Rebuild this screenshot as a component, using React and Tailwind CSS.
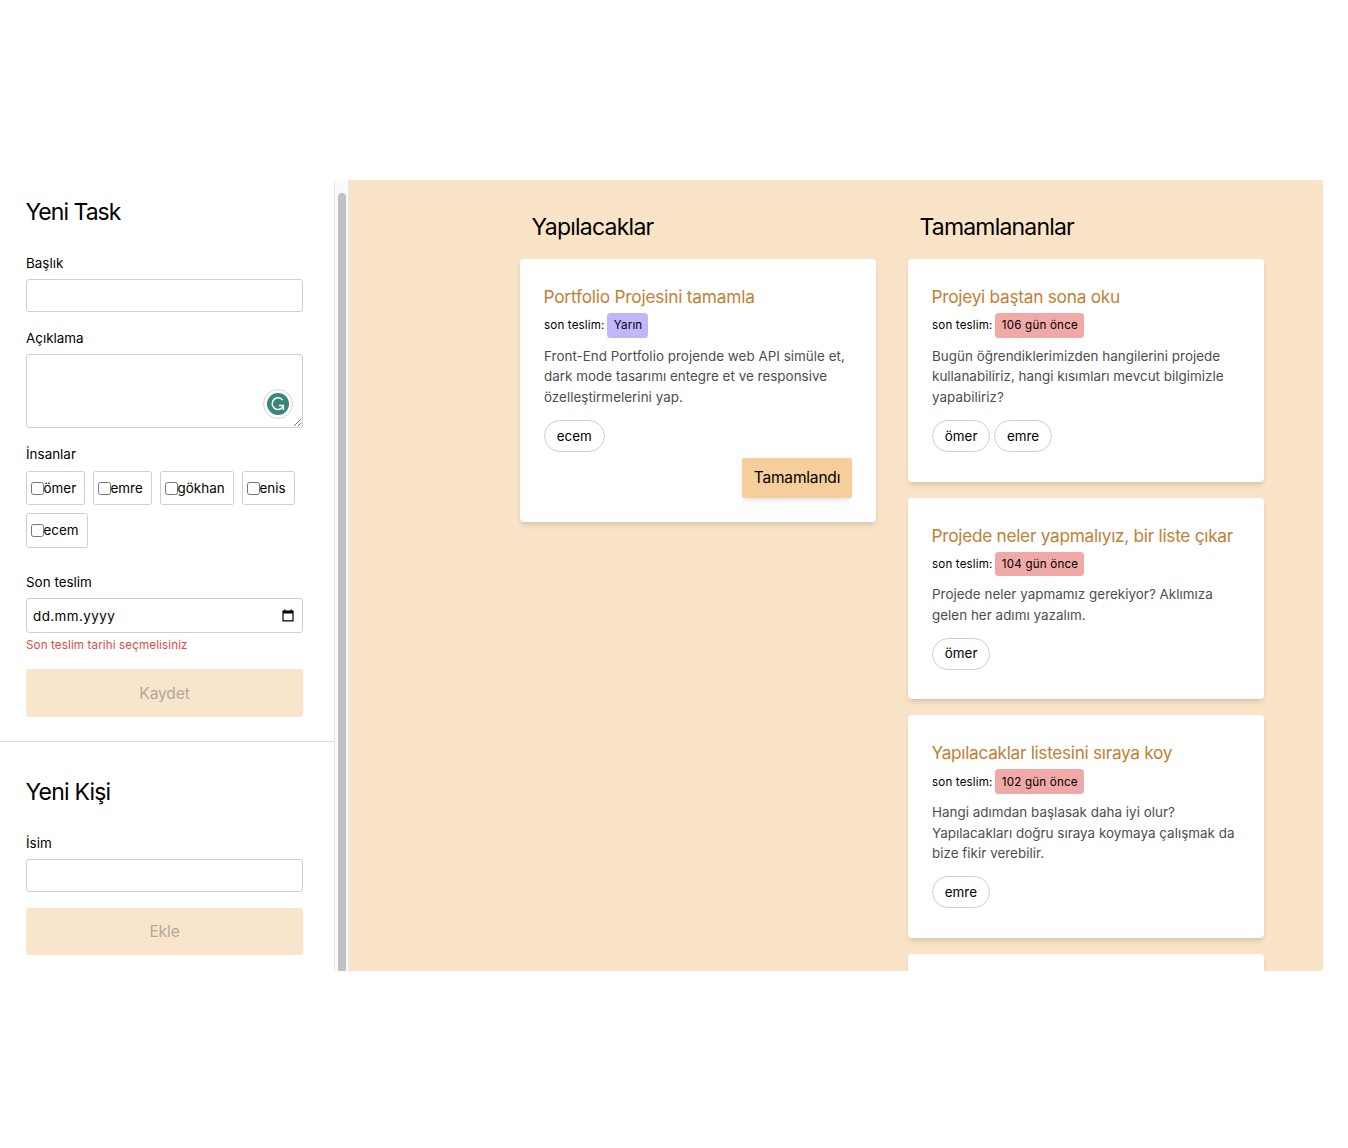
const people = [
  { name: "ömer", box: "w-[59px] h-[34px]" },
  { name: "emre", box: "w-[59px] h-[34px]" },
  { name: "gökhan", box: "w-[74px] h-[34px]" },
  { name: "enis", box: "w-[53px] h-[34px]" },
  { name: "ecem", box: "w-[62px] h-[35px]" },
];

const todo = [
  {
    title: "Portfolio Projesini tamamla",
    tracking: "tracking-[-0.2px]",
    due: "Yarın",
    soon: true,
    lines: [
      "Front-End Portfolio projende web API simüle et,",
      "dark mode tasarımı entegre et ve responsive",
      "özelleştirmelerini yap.",
    ],
    people: ["ecem"],
    action: true,
  },
];

const done = [
  {
    title: "Projeyi baştan sona oku",
    tracking: "tracking-[-0.26px]",
    due: "106 gün önce",
    lines: [
      "Bugün öğrendiklerimizden hangilerini projede",
      "kullanabiliriz, hangi kısımları mevcut bilgimizle",
      "yapabiliriz?",
    ],
    people: ["ömer", "emre"],
  },
  {
    title: "Projede neler yapmalıyız, bir liste çıkar",
    tracking: "tracking-[-0.28px]",
    due: "104 gün önce",
    lines: ["Projede neler yapmamız gerekiyor? Aklımıza", "gelen her adımı yazalım."],
    people: ["ömer"],
  },
  {
    title: "Yapılacaklar listesini sıraya koy",
    tracking: "tracking-[-0.31px]",
    due: "102 gün önce",
    lines: [
      "Hangi adımdan başlasak daha iyi olur?",
      "Yapılacakları doğru sıraya koymaya çalışmak da",
      "bize fikir verebilir.",
    ],
    people: ["emre"],
  },
  {},
];

function Label({ children, className }) {
  return <div className={`h-[22px] text-[13.4px] leading-[22px] tracking-[0.02px] ${className}`}>{children}</div>;
}

function SubmitButton({ children, className }) {
  return (
    <button
      disabled
      className={`block w-full rounded-[3px] bg-[#f9e5cc] text-center text-[15.5px] tracking-[-0.1px] text-[#b0a89c] ${className}`}
    >
      {children}
    </button>
  );
}

function Card({ task }) {
  if (!task.title) {
    return <article className="h-40 rounded-[4px] bg-white shadow-[0_4px_6px_-1px_rgba(0,0,0,0.12)]" />;
  }
  return (
    <article className="rounded-[4px] bg-white p-6 shadow-[0_4px_6px_-1px_rgba(0,0,0,0.11),0_2px_4px_-2px_rgba(0,0,0,0.1)]">
      <h3
        className={`-ml-[0.5px] whitespace-nowrap text-[17.25px] leading-[27px] text-[#bf8136] ${task.tracking}`}
      >
        {task.title}
      </h3>
      <div className="mt-[3px] flex h-[24.5px] items-center text-[11.6px] tracking-[0.16px]">
        <span className="w-[63.3px] whitespace-nowrap pt-[1.5px]">son teslim:</span>
        <span
          className={`flex h-full items-center rounded-[3.5px] pl-[6.5px] pt-[1.5px] ${
            task.soon ? "w-[41px] bg-[#c1b6f9]" : "w-[89px] bg-[#f0a9a7] tracking-[0.2px]"
          }`}
        >
          {task.due}
        </span>
      </div>
      <p className="mt-2 whitespace-nowrap text-[13.4px] leading-[20.75px] tracking-[0.03px] text-[#4d4d4d]">
        {task.lines.map((line) => (
          <span key={line} className="block">
            {line}
          </span>
        ))}
      </p>
      <div className="mt-3 flex gap-1">
        {task.people.map((name) => (
          <span
            key={name}
            className="flex h-8 items-center rounded-full border border-[#cfcfcf] px-[11.75px] text-[13.4px] tracking-[0.02px]"
          >
            {name}
          </span>
        ))}
      </div>
      <div className="mt-[5.75px] flex justify-end">
        {task.action && (
          <button className="h-10 w-[110px] rounded-[2px] bg-[#f5ce9b] pt-px text-[15.5px] tracking-[-0.18px] shadow-[0_4px_6px_-1px_rgba(0,0,0,0.08),0_2px_4px_-2px_rgba(0,0,0,0.08)]">
            Tamamlandı
          </button>
        )}
      </div>
    </article>
  );
}

function Column({ title, tracking, tasks }) {
  return (
    <section className="w-[356px] shrink-0">
      <h2 className={`mb-[14px] ml-[11.5px] mt-[30px] h-[35px] text-[23px] leading-[35px] ${tracking}`}>{title}</h2>
      <div className="flex flex-col gap-4">
        {tasks.map((task, i) => (
          <Card key={i} task={task} />
        ))}
      </div>
    </section>
  );
}

function GrammarBadge() {
  return (
    <span className="absolute bottom-[8.5px] right-[9px] flex size-[30px] items-center justify-center rounded-full border border-[#d6d6e2] bg-white">
      <svg viewBox="0 0 22 22" className="size-[22px]" fill="none">
        <circle cx="11" cy="11" r="11" fill="#3a8677" />
        <path d="M15.6 7.1A5.8 5.8 0 1 0 16.2 13.2" stroke="#fff" strokeWidth="1.5" />
        <path d="M12 12.4H16.4V17" stroke="#fff" strokeWidth="1.5" />
      </svg>
    </span>
  );
}

export default function App() {
  return (
    <div className="h-[1148px] overflow-hidden bg-white pt-[180px] font-[Inter,sans-serif] text-black">
      <div className="flex h-[791px] w-[1323px] overflow-hidden">
        <aside className="w-[334px] shrink-0">
          <form className="pl-[26px] pr-[31px]">
            <h2 className="-ml-[0.5px] mt-[15px] h-[35px] text-[23px] leading-[35px] tracking-[-0.98px]">Yeni Task</h2>
            <Label className="mb-[5px] mt-[22px]">Başlık</Label>
            <div className="h-[33px] rounded-[3px] border border-[#cfcfcf]" />
            <Label className="mb-[5px] mt-[15px]">Açıklama</Label>
            <div className="relative h-[74px] rounded-[3px] border border-[#cfcfcf]">
              <GrammarBadge />
              <svg viewBox="0 0 9 9" className="absolute bottom-0 right-0 size-[9px]" stroke="#666" strokeWidth="0.9">
                <path d="M1 8L8 1M5 8L8 5" />
              </svg>
            </div>
            <Label className="mb-[6px] mt-[15px]">İnsanlar</Label>
            <div className="flex flex-wrap gap-2">
              {people.map((p) => (
                <label
                  key={p.name}
                  className={`flex items-center rounded-[2.5px] border border-[#cfcfcf] pl-[3.5px] text-[13.4px] tracking-[0.03px] ${p.box}`}
                >
                  <span className="size-[13px] shrink-0 rounded-[2.5px] border border-[#767676]" />
                  {p.name}
                </label>
              ))}
            </div>
            <Label className="mb-[5px] mt-[23px]">Son teslim</Label>
            <div className="flex h-[35px] items-center justify-between rounded-[3px] border border-[#cfcfcf] pl-[6px] pr-2 pt-px text-[13.4px] tracking-[0.45px]">
              dd.mm.yyyy
              <svg viewBox="0 0 12 13" className="-mt-px h-[13px] w-3">
                <path d="M2 0.5h1.4v1h5.2v-1H10v1h1.6v10.9H0.4V1.5H2zM1.6 4.6v6.6h8.8V4.6z" fillRule="evenodd" />
              </svg>
            </div>
            <div className="mt-[2px] h-5 text-[11.6px] leading-5 tracking-[0.13px] text-[#de4a47]">
              Son teslim tarihi seçmelisiniz
            </div>
            <SubmitButton className="mt-[14px] h-12 pt-[2px]">Kaydet</SubmitButton>
          </form>
          <div className="mt-6 h-px bg-[#dcdcdc]" />
          <form className="pl-[26px] pr-[31px]">
            <h2 className="-ml-[0.5px] mt-[33px] h-[35px] text-[23px] leading-[35px] tracking-[-0.8px]">Yeni Kişi</h2>
            <Label className="mb-[5px] mt-[22px]">İsim</Label>
            <div className="h-[33px] rounded-[3px] border border-[#cfcfcf]" />
            <SubmitButton className="mt-4 h-[47px] pt-px">Ekle</SubmitButton>
          </form>
        </aside>
        <div className="w-[15px] shrink-0 border-x border-[#e8e8e8] bg-[#fafafa] pl-[3.3px] pt-[13px]">
          <div className="h-[900px] w-2 rounded-full bg-[#c1c1c1]" />
        </div>
        <main className="flex flex-1 gap-8 bg-[#fae4c8] pl-[171px]">
          <Column title="Yapılacaklar" tracking="tracking-[-0.76px]" tasks={todo} />
          <Column title="Tamamlananlar" tracking="tracking-[-0.82px]" tasks={done} />
        </main>
      </div>
    </div>
  );
}
